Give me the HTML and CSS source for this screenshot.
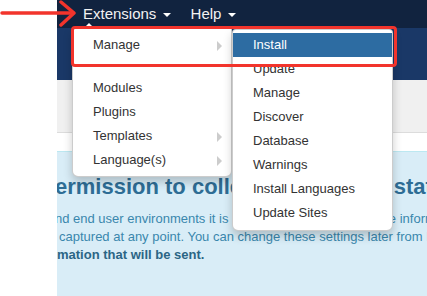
FILE: index.html
```html
<!DOCTYPE html>
<html lang="en">
    <head>
        <meta charset="UTF-8" />
        <meta name="viewport" content="width=device-width, initial-scale=1.0" />
        <title>Extensions: Install</title>
        <link rel="stylesheet" href="styles.css">
    </head>
    <body>
        <div class="page">
            <div class="gutter"></div>
            <div class="app">
                <nav class="navbar">
                    <ul class="nav">
                        <li class="nav-item open">
                            <a class="nav-link">Extensions <span class="caret"></span></a>
                            <ul class="dropdown-menu">
                                <li class="dropdown-submenu">
                                    <a>Manage</a>
                                    <ul class="dropdown-menu submenu">
                                        <li class="active"><a>Install</a></li>
                                        <li><a>Update</a></li>
                                        <li><a>Manage</a></li>
                                        <li><a>Discover</a></li>
                                        <li><a>Database</a></li>
                                        <li><a>Warnings</a></li>
                                        <li><a>Install Languages</a></li>
                                        <li><a>Update Sites</a></li>
                                    </ul>
                                </li>
                                <li class="divider"></li>
                                <li><a>Modules</a></li>
                                <li><a>Plugins</a></li>
                                <li class="dropdown-submenu"><a>Templates</a></li>
                                <li class="dropdown-submenu"><a>Language(s)</a></li>
                            </ul>
                        </li>
                        <li class="nav-item">
                            <a class="nav-link">Help <span class="caret"></span></a>
                        </li>
                    </ul>
                </nav>
                <header class="header"></header>
                <div class="toolbar"></div>
                <div class="alert">
                    <h4 class="alert-heading">ermission to collect some basic statistics.</h4>
                    <p class="line first">nd end user environments it is helpful if you send some site information back to a Joomla! controlled central server.</p>
                    <p class="line second">captured at any point. You can change these settings later from Plugins &gt; System - Joomla Statistics.</p>
                    <p class="line strong">mation that will be sent.</p>
                </div>
            </div>
        </div>

        <!-- annotations drawn over the screenshot -->
        <svg class="mark-arrow" width="80" height="28" viewBox="0 0 80 28">
            <path d="M2 13 H73" />
            <path d="M61 2 L74 13 L61 25" />
        </svg>
        <div class="mark-box"></div>
    </body>
</html>
```

FILE: styles.css
```css
* {
    margin: 0;
    padding: 0;
    box-sizing: border-box;
}
body {
    font-family: "Liberation Sans", Arial, sans-serif;
    font-size: 13px;
    color: #333;
    background: #fff;
    width: 427px;
    height: 296px;
    overflow: hidden;
    position: relative;
}
ul {
    list-style: none;
}
.page {
    display: flex;
    height: 296px;
}
.gutter {
    width: 57px;
    flex-shrink: 0;
    background: #fff;
}
.app {
    flex: 1;
    display: flex;
    flex-direction: column;
    min-width: 0;
}

/* top bar */
.navbar {
    height: 28px;
    background: #11233f;
    position: relative;
    z-index: 5;
}
.nav {
    display: flex;
    padding-left: 15px;
}
.nav-item {
    position: relative;
}
.nav-link {
    display: block;
    padding: 0 9px 0 11px;
    line-height: 27px;
    font-size: 15px;
    color: #f2f2f2;
}
.caret {
    display: inline-block;
    width: 0;
    height: 0;
    margin-left: 2px;
    vertical-align: middle;
    border-top: 4px solid #fff;
    border-left: 4px solid transparent;
    border-right: 4px solid transparent;
}

/* dropdowns */
.dropdown-menu {
    display: none;
    position: absolute;
    top: 28px;
    left: 0;
    width: 160px;
    padding: 4px 0;
    background: #fff;
    border: 1px solid rgba(0, 0, 0, 0.2);
    border-radius: 0 0 6px 6px;
    box-shadow: 0 5px 10px rgba(0, 0, 0, 0.2);
}
.open > .dropdown-menu {
    display: block;
}
.open > .dropdown-menu::before {
    content: "";
    position: absolute;
    top: -6px;
    left: 10px;
    border-bottom: 6px solid #fff;
    border-left: 6px solid transparent;
    border-right: 6px solid transparent;
}
.dropdown-menu li > a {
    display: block;
    padding: 3px 20px;
    line-height: 18px;
    color: #333;
    white-space: nowrap;
}
.dropdown-menu .divider {
    height: 1px;
    margin: 9px 1px;
    background: #fff;
}
.dropdown-submenu {
    position: relative;
}
.dropdown-submenu::after {
    content: "";
    position: absolute;
    right: 9px;
    top: 8px;
    border-left: 5px solid #ccc;
    border-top: 5px solid transparent;
    border-bottom: 5px solid transparent;
}
.submenu {
    display: block;
    top: -4px;
    left: 159px;
    width: 161px;
    padding: 3px 0 5px;
    border-radius: 4px 4px 6px 6px;
}
.submenu li.active > a {
    background: #2d6ca2;
    color: #fff;
}

/* page under the menu */
.header {
    height: 52px;
    background: #1a3867;
}
.toolbar {
    height: 53px;
    background: #f0f0f0;
    border-bottom: 1px solid #dcdcdc;
}
.alert {
    margin-top: 18px;
    flex: 1;
    background: #d9edf7;
    border-top: 1px solid #bce8f1;
    color: #3a87ad;
    overflow: hidden;
}
.alert-heading {
    margin-top: 23px;
    font-size: 22px;
    line-height: 24px;
    font-weight: 700;
    color: #2e6d95;
    white-space: nowrap;
    text-indent: -2px;
}
.line {
    line-height: 18px;
    white-space: nowrap;
}
.line.first {
    margin-top: 11px;
    text-indent: -2px;
}
.line.second {
    text-indent: 2px;
}
.line.strong {
    font-weight: 700;
    color: #2b6585;
}

/* red annotations */
.mark-arrow {
    position: absolute;
    top: 0;
    left: 0;
    z-index: 20;
    fill: none;
    stroke: #f2342c;
    stroke-width: 3.5;
    stroke-linecap: round;
    stroke-linejoin: round;
}
.mark-box {
    position: absolute;
    top: 26px;
    left: 71px;
    width: 326px;
    height: 41px;
    border: 3px solid #f2342c;
    border-radius: 4px;
    z-index: 20;
}
```
